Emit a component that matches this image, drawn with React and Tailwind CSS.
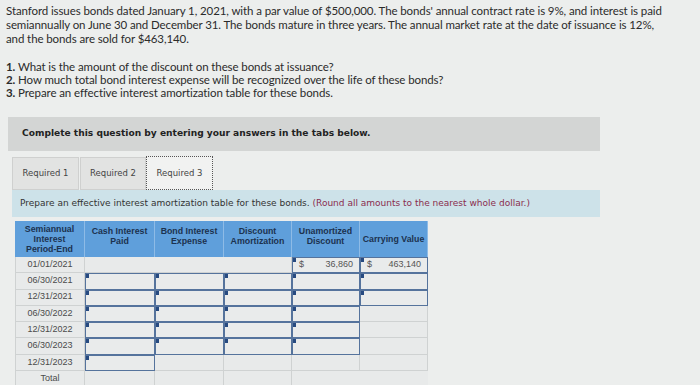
import React from 'react';

const FONT_BODY = { fontFamily: 'Lato, "Open Sans", "Liberation Sans", Arial, sans-serif' };
const FONT_UI = { fontFamily: '"DejaVu Sans", Verdana, sans-serif' };

const headers = [
  ['Semiannual', 'Interest', 'Period-End'],
  ['Cash Interest', 'Paid'],
  ['Bond Interest', 'Expense'],
  ['Discount', 'Amortization'],
  ['Unamortized', 'Discount'],
  ['Carrying Value'],
];

// i = input cell, p = plain cell
const rows = [
  { date: '06/30/2021', cells: ['i', 'i', 'i', 'i', 'i'] },
  { date: '12/31/2021', cells: ['i', 'i', 'i', 'i', 'i'] },
  { date: '06/30/2022', cells: ['i', 'i', 'i', 'i', 'p'] },
  { date: '12/31/2022', cells: ['i', 'i', 'i', 'i', 'p'] },
  { date: '06/30/2023', cells: ['i', 'i', 'i', 'i', 'p'] },
  { date: '12/31/2023', cells: ['i', 'p', 'p', 'p', 'p'] },
];

function Marker() {
  return <span className="absolute left-0 top-0 w-[3px] h-[4px] bg-[#274a80]" />;
}

function InputCell({ children }) {
  return (
    <div className="relative h-[16.3px] border-[1.5px] border-[#55739c] bg-[#e9ebeb] flex items-center px-[6px] text-[9px] text-[#555]">
      <Marker />
      {children}
    </div>
  );
}

function PlainCell({ children, className = '' }) {
  return (
    <div className={`h-[16.3px] border-r border-b border-[#cfd2d2] bg-[#e8eaea] flex items-center justify-center text-[9px] text-[#4a4a4a] ${className}`}>
      {children}
    </div>
  );
}

export default function App() {
  return (
    <div className="w-[700px] h-[385px] overflow-hidden bg-[#eceeed] text-[#2b2b2b]" style={FONT_BODY}>
      <div className="pl-[6px] pt-[4px] text-[11.5px] leading-[14px] tracking-[-0.1px]">
        <p>
          Stanford issues bonds dated January 1, 2021, with a par value of $500,000. The bonds' annual contract rate is 9%, and interest is paid<br />
          semiannually on June 30 and December 31. The bonds mature in three years. The annual market rate at the date of issuance is 12%,<br />
          and the bonds are sold for $463,140.
        </p>
        <div className="mt-[14px] leading-[13px]">
          <p><span className="font-bold">1.</span> What is the amount of the discount on these bonds at issuance?</p>
          <p><span className="font-bold">2.</span> How much total bond interest expense will be recognized over the life of these bonds?</p>
          <p><span className="font-bold">3.</span> Prepare an effective interest amortization table for these bonds.</p>
        </div>
      </div>

      <div className="ml-[8px] mt-[18px] w-[592px] h-[34px] bg-[#d3d5d4] flex items-center pl-[14px]">
        <span className="font-bold text-[9.1px] text-[#222]" style={FONT_UI}>
          Complete this question by entering your answers in the tabs below.
        </span>
      </div>

      <div className="ml-[12px] mt-[5px] flex items-end h-[34px]" style={FONT_UI}>
        <div className="w-[67px] h-[33px] bg-[#e2e3e2] border border-[#cfd0cf] flex items-center justify-center text-[8.5px] text-[#444]">Required 1</div>
        <div className="ml-[1px] w-[66px] h-[33px] bg-[#e2e3e2] border border-[#cfd0cf] flex items-center justify-center text-[8.5px] text-[#444]">Required 2</div>
        <div className="w-[67px] h-[34px] bg-[#f1f2f1] border border-dotted border-[#555] flex items-center justify-center text-[8.5px] text-[#444]">Required 3</div>
      </div>

      <div className="ml-[12px] w-[588px] h-[27px] bg-[#cde2e9] flex items-center pl-[8px] text-[9px] text-[#333]" style={FONT_UI}>
        <span>Prepare an effective interest amortization table for these bonds. <span className="text-[#8a2d4e]">(Round all amounts to the nearest whole dollar.)</span></span>
      </div>

      <div className="ml-[15px] mt-[4px] w-[413px]" style={{ fontFamily: '"Liberation Sans", Arial, sans-serif' }}>
        <div className="grid grid-cols-[70px_70px_69px_68px_68px_68px] bg-[#5f9fdb] h-[36px]">
          {headers.map((h, i) => (
            <div key={i} className={`flex flex-col justify-center items-center border-r border-[#8ebbe6] font-bold text-[8.8px] leading-[10px] text-[#1c324f] text-center ${i === 0 || i === 5 ? '' : 'pb-[6px]'}`}>
              {h.map((l) => <span key={l}>{l}</span>)}
            </div>
          ))}
        </div>
        <div className="grid grid-cols-[70px_70px_69px_68px_68px_68px]">
          <PlainCell className="border-l">01/01/2021</PlainCell>
          <div className="col-span-3 h-[16.3px] border-r border-b border-[#cfd2d2] bg-[#e8eaea]" />
          <InputCell><span>$</span><span className="ml-auto">36,860</span></InputCell>
          <InputCell><span>$</span><span className="ml-auto">463,140</span></InputCell>
          {rows.map((r) => (
            <React.Fragment key={r.date}>
              <PlainCell className="border-l">{r.date}</PlainCell>
              {r.cells.map((c, i) => (c === 'i' ? <InputCell key={i} /> : <PlainCell key={i} />))}
            </React.Fragment>
          ))}
          <PlainCell className="border-l">Total</PlainCell>
          <PlainCell />
          <PlainCell />
          <PlainCell />
          <div className="col-span-2 h-[16.3px] bg-[#e8eaea]" />
        </div>
      </div>
    </div>
  );
}
